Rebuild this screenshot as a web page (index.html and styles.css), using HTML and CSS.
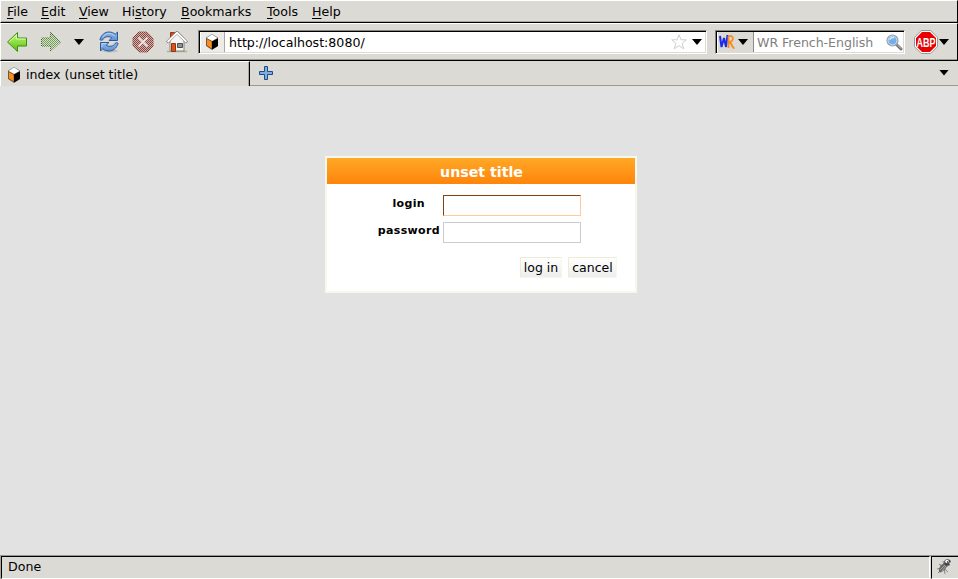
FILE: index.html
```
<!DOCTYPE html>
<html lang="en">
<head>
<meta charset="utf-8">
<title>index (unset title)</title>
<link rel="stylesheet" href="styles.css">
</head>
<body>
<svg width="0" height="0" class="defs" aria-hidden="true">
  <defs>
    <linearGradient id="green" x2="0" y2="1"><stop stop-color="#c4f68b"/><stop offset=".5" stop-color="#8fdf3f"/><stop offset="1" stop-color="#55b80e"/></linearGradient>
    <linearGradient id="blue" x2="0" y2="1"><stop stop-color="#8fb8e8"/><stop offset="1" stop-color="#5f93d2"/></linearGradient>
    <pattern id="dots" width="2" height="2" patternUnits="userSpaceOnUse"><path d="M0 0h1v1H0zM1 1h1v1H1z" fill="#dcdad5"/></pattern>
    <symbol id="cube" viewBox="0 0 14 16"><path d="M7 0l6 3.500v8.500l-6 4-6-4V3.500z" fill="#777"/><path d="M7 .5l5.500 3.500L7 7 1.500 4z" fill="#fff"/><path d="M1.500 4.500L7 7.500V15l-5.500-3.500z" fill="#ff8c1a" stroke="#3a2a18" stroke-width=".5"/><path d="M7 7.500l6-3.300V12l-6 3.500z" fill="#000"/></symbol>
  </defs>
</svg>
<nav class="menubar">
  <span class="m-file"><u>F</u>ile</span><span class="m-edit"><u>E</u>dit</span><span class="m-view"><u>V</u>iew</span><span class="m-history">Hi<u>s</u>tory</span><span class="m-bookmarks"><u>B</u>ookmarks</span><span class="m-tools"><u>T</u>ools</span><span class="m-help"><u>H</u>elp</span>
</nav>
<div class="toolbar">
  <svg class="back" width="22" height="22" viewBox="0 0 22 22"><path d="M1.500 11L11.500 1.500v5.500h9v8h-9v5.500z" fill="url(#green)" stroke="#3d8f12"/><path d="M3 11l7.500-7v4h9" fill="none" stroke="#d9fbb0"/></svg>
  <svg class="forward" width="22" height="22" viewBox="0 0 22 22"><path d="M20.500 11L10.500 1.500v5.500h-9v8h9v5.500z" fill="#6fa450" stroke="#35691f"/><path d="M0 0h22v22H0z" fill="url(#dots)"/></svg>
  <i class="caret"></i>
  <svg class="reload" width="22" height="22" viewBox="0 0 22 22"><ellipse cx="12" cy="20" rx="8" ry="1.500" fill="#bdbbb6"/><g fill="url(#blue)" stroke="#2b5a9c" stroke-linejoin="round"><path d="M2 8.500C3.500 3.500 7 1 11 1c2.500 0 4.500.8 6.200 2.300L19.500 1v8.500H11l2.800-2.800C10.500 5 6.500 5.500 5 8.500 4 9.500 2 9.500 2 8.500z"/><path d="M20 12.500c-1.500 5-5 7.500-9 7.500-2.500 0-4.500-.8-6.200-2.300L2.500 20v-8.500H11l-2.800 2.800c3.300 1.700 7.300 1.200 8.800-1.800 1-1 3-1 3 0z"/></g><path d="M4.500 6.500C7.500 2 12.500 1 17 5M4 16v-3.500h4.500" fill="none" stroke="#b4d2f4"/></svg>
  <svg class="stop" width="22" height="22" viewBox="0 0 22 22"><path d="M7 1h8l6 6v8l-6 6H7l-6-6V7z" fill="#92433e" stroke="#7d3a36"/><path d="M0 0h22v22H0z" fill="url(#dots)" opacity=".75"/><path d="M6.500 6.500l9 9m0-9l-9 9" stroke="#ece2e0" stroke-width="1.800"/></svg>
  <svg class="home" width="22" height="22" viewBox="0 0 22 22"><path d="M1 20.500h20" stroke="#a9b878" stroke-width="1.500"/><path d="M4.500 1.500h4v6h-4z" fill="#d84a20" stroke="#9c3413"/><path d="M4 10l7-7 7 7v10H4z" fill="#f5f4f0" stroke="#888"/><path d="M1 11.500L11 1.500l10 10" fill="none" stroke="#777" stroke-width="3"/><path d="M1.500 11L11 1.800l9.500 9.200" fill="none" stroke="#fff" stroke-width="1.800"/><path d="M5.500 12.500h4v8h-4z" fill="#d9531e" stroke="#9a3210"/><path d="M11.500 12.500h5v4h-5z" fill="#8c9294" stroke="#4c5052"/></svg>
  <div class="field url"><span class="site"><svg width="14" height="16"><use href="#cube"/></svg></span><span class="address">http://localhost:8080/</span>
    <svg class="star" width="16" height="16" viewBox="0 0 16 16"><path d="M8 .8l2 5h5.300l-4.100 3.500 1.500 5.500L8 11.700l-4.700 3.100 1.500-5.500L.7 5.800H6z" fill="#fff" stroke="#cecece"/></svg><i class="caret"></i></div>
  <div class="field search"><span class="engine"><svg width="16" height="16" viewBox="0 0 16 16"><path d="M1 2l1.500 11L5 4l2 9L8.500 1" fill="none" stroke="#1d2be8" stroke-width="2"/><path d="M9.500 14V2.500c5.500-2.500 6 5 .5 5.500 3 0 2.500 6.500 5.500 6" fill="none" stroke="#f78b1e" stroke-width="1.800"/></svg><i class="caret"></i></span><span class="hint">WR French-English</span>
    <svg class="lens" width="17" height="17" viewBox="0 0 17 17"><path d="M10 10l5 5" stroke="#777" stroke-width="3" stroke-linecap="round"/><path d="M11 10.500l4 4" stroke="#bbb"/><circle cx="6.500" cy="6.500" r="5.500" fill="#77aee8" stroke="#9ba2a8" stroke-width="1.200"/><circle cx="6.500" cy="6.500" r="4.400" fill="none" stroke="#d9e8f8" stroke-width=".8"/><path d="M4 6c0-2 2-3 4-2" fill="none" stroke="#d4e7fc" stroke-width="1.500"/></svg></div>
  <svg class="abp" width="24" height="24" viewBox="0 0 24 24"><path d="M7.300.5h9.400l6.800 6.800v9.400l-6.800 6.800H7.300L.5 16.700V7.300z" fill="#fff" stroke="#999"/><path d="M8 2h8l6 6v8l-6 6H8l-6-6V8z" fill="#e90000"/><text x="12" y="16.500" text-anchor="middle" textLength="19" lengthAdjust="spacingAndGlyphs">ABP</text></svg><i class="caret"></i>
</div>
<div class="tabs">
  <div class="tab"><svg width="14" height="16"><use href="#cube"/></svg><span>index (unset title)</span></div>
  <div class="strip"><svg width="14" height="14" viewBox="0 0 14 14"><path d="M5.500.5h3v5h5v3h-5v5h-3v-5h-5v-3h5z" fill="#80ade0" stroke="#204a87"/></svg><i class="caret"></i></div>
</div>
<main class="page">
  <form class="login">
    <h1>unset title</h1>
    <div class="row"><label for="login" class="l-login">login</label><input id="login" class="active"></div>
    <div class="row second"><label for="password">password</label><input id="password" type="password"></div>
    <div class="buttons"><button type="button" class="submit">log in</button><button type="button" class="cancel">cancel</button></div>
  </form>
</main>
<footer class="status"><div class="message">Done</div><div class="bug"><svg width="18" height="18" viewBox="0 0 18 18"><path d="M4 6l9 8M8 3l2 13M2 11l11-3M3 15l9-9M6 6l-1 9" stroke="#888" stroke-width="1"/><ellipse cx="8" cy="9.500" rx="2.800" ry="5.500" transform="rotate(42 8 9.500)" fill="#666"/><path d="M5 12l5-5M7 13l4-5" stroke="#aaa"/><circle cx="12.500" cy="4.500" r="3.300" fill="#444"/><circle cx="12" cy="3.500" r="1.800" fill="#fff"/><circle cx="12.500" cy="4" r=".8" fill="#111"/><circle cx="15.500" cy="5.500" r="1.200" fill="#ddd"/></svg></div></footer>
</body>
</html>
```
FILE: styles.css
```
* { box-sizing: border-box; }
body {
  margin: 0;
  height: 579px;
  display: flex;
  flex-direction: column;
  overflow: hidden;
  background: #e2e2e2;
  color: #000;
  font: 12.6px/16px "DejaVu Sans", sans-serif;
}
.defs { position: absolute; }
svg { display: block; flex: none; }
.menubar {
  display: flex;
  height: 23px;
  padding: 3px 0 0 6px;
  background: #dcdad5;
  border-top: 1px solid #fff;
  border-left: 1px solid #fff;
  border-right: 1px solid #000;
  border-bottom: 1px solid #000;
  box-shadow: inset 0 -1px #aaa89f;
}
.menubar span { white-space: nowrap; }
.menubar u { text-underline-offset: 2px; text-decoration-thickness: 1px; text-decoration-skip-ink: none; }
.m-file { width: 34px; }
.m-edit { width: 38px; }
.m-view { width: 43px; }
.m-history { width: 59px; }
.m-bookmarks { width: 86px; }
.m-tools { width: 45px; }
.caret {
  width: 10px;
  height: 6px;
  background: #000;
  clip-path: polygon(0 0, 100% 0, 50% 100%);
  flex: none;
}
.toolbar {
  display: flex;
  align-items: center;
  height: 38px;
  padding-left: 5px;
  background: #dcdad5;
  border: 1px solid #fff;
  border-right-color: #000;
  border-bottom-color: #000;
  box-shadow: inset 0 -1px #9d9c92;
}
.forward { margin: 0 12px 0 12px; }
.reload { margin-left: 14px; }
.stop { margin-left: 12px; }
.home { margin: 0 10px 0 12px; }
.field {
  display: flex;
  align-items: center;
  height: 24px;
  background: #fff;
  border: 1px solid;
  border-color: #85847b #fff #fff #85847b;
  box-shadow: inset 1px 1px #000, inset -1px -1px #dcdad5;
}
.url { width: 509px; padding: 2px 4px 2px 2px; }
.site {
  width: 24px;
  height: 20px;
  padding: 2px 0 0 4px;
  border-right: 1px solid #aaa89f;
  background: #ecebe8;
}
.address { flex: 1; margin: 1px 0 0 4px; }
.star { margin-right: 5px; }
.search { width: 190px; margin-left: 8px; padding: 2px 1px 2px 2px; }
.engine {
  display: flex;
  align-items: center;
  width: 36px;
  height: 20px;
  padding-left: 1px;
  background: #dcdad5;
  border-right: 1px solid #8e8d84;
}
.engine .caret { margin-left: 3px; }
.hint { flex: 1; margin: 1px 0 0 3px; color: #7f7f7f; white-space: nowrap; letter-spacing: -.05px; }
.abp { margin: 0 1px 0 9px; }
.abp text { fill: #fff; font: bold 12px "Liberation Sans", sans-serif; }
.tabs { display: flex; height: 25px; background: #dcdad5; }
.tab {
  display: flex;
  align-items: center;
  width: 250px;
  padding: 1px 0 0 7px;
  gap: 5px;
  border-top: 1px solid #fff;
  border-left: 1px solid #fff;
  border-right: 1px solid #000;
  box-shadow: inset -1px 0 #aaa89f;
}
.tab svg { margin-left: -1px; }
.strip {
  display: flex;
  flex: 1;
  align-items: center;
  justify-content: space-between;
  padding: 0 9px 0 9px;
  border-bottom: 1px solid #9d9c92;
}
.strip .caret { margin-bottom: 1px; }
.page { flex: 1; padding: 70px 0 0 325px; }
.login {
  width: 312px;
  height: 137px;
  background: #fff;
  border: 2px solid #f7f7eb;
}
h1 {
  margin: 0 0 11px;
  height: 26px;
  padding: 0 0 0 1px;
  text-align: center;
  color: #fff;
  background: linear-gradient(#ffa926, #ff840c);
  font: bold 14.2px/28px "DejaVu Sans", sans-serif;
}
.row { display: flex; height: 21px; }
.second { margin-top: 6px; }
label {
  width: 116px;
  padding: 1px 3px 0 0;
  text-align: right;
  font: bold 11px/16px "DejaVu Sans", sans-serif;
  letter-spacing: .35px;
}
.l-login { padding-right: 18px; }
input {
  width: 138px;
  height: 21px;
  padding: 0 3px;
  background: #fff;
  border: 1px solid #ccc;
  border-radius: 0;
  outline: none;
}
.active { border-color: #84400a #ffcc99 #ffcc99 #84400a; }
.buttons { display: flex; gap: 6px; margin: 14px 0 0 193px; }
button {
  height: 21px;
  padding: 0;
  font: 12.5px/18px "DejaVu Sans", sans-serif;
  color: #000;
  background: linear-gradient(#fff, #ededed);
  border: 1px solid;
  border-color: #ededd5 #f7f7eb #f7f7eb #ededd5;
}
.submit { width: 42px; }
.cancel { width: 49px; }
.status { display: flex; height: 24px; background: #dcdad5; border-top: 1px solid #93978a; }
.message {
  flex: 1;
  padding: 2px 0 0 6px;
  border: 1px solid #000;
  border-right-color: #fff;
  border-bottom-color: #fff;
  box-shadow: -1px 0 #aaa89f;
  margin-left: 1px;
}
.bug { width: 27px; margin-left: 1px; padding: 1px 0 0 3px; border-top: 1px solid #000; border-left: 1px solid #000; border-bottom: 1px solid #fff; }
```
